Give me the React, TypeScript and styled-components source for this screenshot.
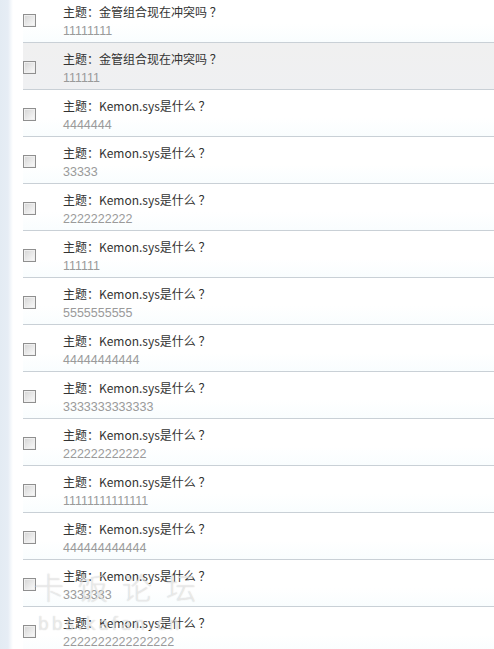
import styled, { createGlobalStyle } from "styled-components";

const GlobalStyle = createGlobalStyle`
  html, body {
    margin: 0;
    padding: 0;
    background: #ffffff;
    overflow: hidden;
  }
`;

const Page = styled.div`
  position: relative;
  display: flex;
  width: 494px;
  height: 649px;
  overflow: hidden;
  background: linear-gradient(
    to right,
    #e3ebf3 0,
    #e6edf5 8px,
    #f5f8fb 11px,
    #ffffff 13px
  );
  font-family: "Noto Sans CJK SC", "Liberation Sans", sans-serif;
`;

const List = styled.ul`
  list-style: none;
  margin: -4px 0 0 23px;
  padding: 0;
  flex: 1;
`;

const Row = styled.li<{ active?: boolean }>`
  display: grid;
  grid-template-columns: 40px 1fr;
  height: 46px;
  border-bottom: 1px solid #c9d0d6;
  background: ${(props) =>
    props.active
      ? "linear-gradient(to bottom, #f0f0f0 0, #eff0f2 100%)"
      : "linear-gradient(to bottom, #ffffff 0, #ffffff 60%, #f9fdfe 100%)"};
`;

const Check = styled.span`
  box-sizing: border-box;
  width: 13px;
  height: 13px;
  margin-top: 18px;
  border: 1px solid #8f8f8f;
  background: linear-gradient(135deg, #d4d4d4 0, #e8e8e8 50%, #fbfbfb 100%);
  box-shadow: inset 0 0 0 1px #efefef;
`;

const Text = styled.div`
  display: flex;
  flex-direction: column;
  padding-top: 7px;
`;

const Title = styled.span`
  font-size: 12px;
  line-height: 18px;
  color: #333333;
`;

const Sub = styled.span`
  font-family: "Liberation Sans", sans-serif;
  font-size: 12.5px;
  line-height: 18px;
  margin-top: 1px;
  color: #9a9a9a;
`;

const Watermark = styled.div`
  position: absolute;
  left: 34px;
  top: 566px;
  display: flex;
  flex-direction: column;
  pointer-events: none;
  color: rgba(255, 255, 255, 0.55);
  text-shadow: 0 0 1px rgba(120, 120, 120, 0.4);
`;

const MarkBig = styled.span`
  font-family: "Noto Sans CJK SC", sans-serif;
  font-size: 30px;
  line-height: 40px;
  letter-spacing: 14px;
  font-weight: 300;
`;

const MarkSmall = styled.span`
  font-family: "DejaVu Sans", sans-serif;
  font-size: 17px;
  line-height: 20px;
  letter-spacing: 3px;
  margin: 8px 0 0 4px;
`;

const topicA = "主题：金管组合现在冲突吗 ？";
const topicB = "主题：Kemon.sys是什么 ？";

const rows = [
  { title: topicA, sub: "11111111" },
  { title: topicA, sub: "111111", active: true },
  { title: topicB, sub: "4444444" },
  { title: topicB, sub: "33333" },
  { title: topicB, sub: "2222222222" },
  { title: topicB, sub: "111111" },
  { title: topicB, sub: "5555555555" },
  { title: topicB, sub: "44444444444" },
  { title: topicB, sub: "3333333333333" },
  { title: topicB, sub: "222222222222" },
  { title: topicB, sub: "11111111111111" },
  { title: topicB, sub: "444444444444" },
  { title: topicB, sub: "3333333" },
  { title: topicB, sub: "2222222222222222" },
];

export default function App() {
  return (
    <Page>
      <GlobalStyle />
      <List>
        {rows.map((r, i) => (
          <Row key={i} active={r.active}>
            <Check />
            <Text>
              <Title>{r.title}</Title>
              <Sub>{r.sub}</Sub>
            </Text>
          </Row>
        ))}
      </List>
      <Watermark>
        <MarkBig>卡饭论坛</MarkBig>
        <MarkSmall>bbs.kafan.cn</MarkSmall>
      </Watermark>
    </Page>
  );
}
